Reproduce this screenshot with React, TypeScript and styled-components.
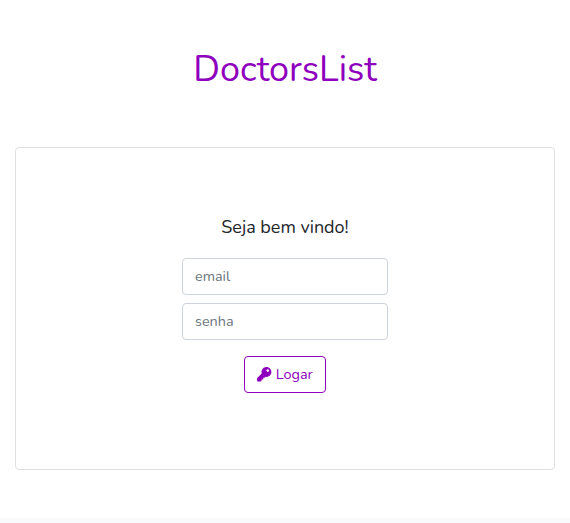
import React from 'react';
import styled, { createGlobalStyle } from 'styled-components';
import { FaKey } from 'react-icons/fa';

const GlobalStyle = createGlobalStyle`
  *, *::before, *::after { box-sizing: border-box; }
  body {
    margin: 0;
    background: #f8fafc;
    color: #212529;
    font-family: Nunito, 'Open Sans', sans-serif;
    font-size: 14.4px;
    line-height: 1.6;
  }
`;

const Page = styled.main`
  height: 518px;
  padding: 41px 15px 0;
  background: #fff;
`;

const Title = styled.h1`
  margin: 0 0 48px;
  height: 58px;
  line-height: 58px;
  font-size: 36px;
  font-weight: 400;
  text-align: center;
  color: #8e00bd;
`;

const Card = styled.section`
  height: 323px;
  padding-top: 65px;
  border: 1px solid #dfdfdf;
  border-radius: 4px;
  display: flex;
  flex-direction: column;
  align-items: center;
`;

const Welcome = styled.h2`
  margin: 0 0 16px;
  height: 29px;
  line-height: 29px;
  font-size: 18px;
  font-weight: 400;
  white-space: nowrap;
`;

const LoginForm = styled.form`
  display: flex;
  flex-direction: column;
  align-items: center;
  gap: 8px;
`;

const Field = styled.input`
  width: 206px;
  height: 37px;
  padding: 5px 12px 7px;
  border: 1px solid #ced4da;
  border-radius: 4px;
  background: #fff;
  color: #495057;
  font: inherit;
  &::placeholder { color: #6c757d; opacity: 1; }
`;

const LoginButton = styled.button`
  width: 82px;
  height: 37px;
  margin-top: 8px;
  padding: 0;
  display: flex;
  align-items: center;
  justify-content: center;
  gap: 4px;
  border: 1px solid #8e00bd;
  border-radius: 4px;
  background: transparent;
  color: #8e00bd;
  font: inherit;
`;

const KeyIcon = styled(FaKey)`
  width: 14.4px;
  height: 14.4px;
  flex: none;
`;

export default function App() {
  return (
    <>
      <GlobalStyle />
      <Page>
        <Title>DoctorsList</Title>
        <Card>
          <Welcome>Seja bem vindo!</Welcome>
          <LoginForm>
            <Field type="email" placeholder="email" />
            <Field type="password" placeholder="senha" />
            <LoginButton type="button">
              <KeyIcon />
              <span>Logar</span>
            </LoginButton>
          </LoginForm>
        </Card>
      </Page>
    </>
  );
}
